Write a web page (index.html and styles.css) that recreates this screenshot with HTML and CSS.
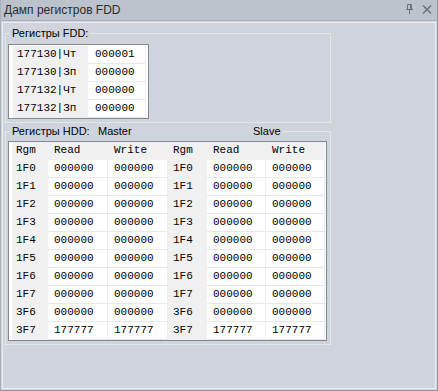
FILE: index.html
```html
<!DOCTYPE html>
<html lang="ru">
<head>
<meta charset="utf-8">
<title>Дамп регистров FDD</title>
<link rel="stylesheet" href="styles.css">
</head>
<body>
<div class="window">
  <div class="titlebar">
    <span class="title">Дамп регистров FDD</span>
    <span class="buttons">
      <svg class="pin" width="8" height="10" viewBox="0 0 8 10"><path d="M1.5 0.5H5.5V5.5M1.5 0.5V5.5M4.5 0.5V5.5" fill="none" stroke="#6e7278" stroke-width="1"/><path d="M0 5.5H7" stroke="#6e7278" stroke-width="1"/><path d="M3.5 6V10" stroke="#6e7278" stroke-width="1"/></svg>
      <svg class="close" width="10" height="9" viewBox="0 0 10 9"><path d="M1 0.5L9 8.5M9 0.5L1 8.5" stroke="#6e7278" stroke-width="1.5"/></svg>
    </span>
  </div>
  <div class="frame">
    <fieldset class="group fdd">
      <legend>Регистры FDD:</legend>
      <div class="list fdd-list">
        <div class="row"><span class="cell key">177130|Чт</span><span class="cell">000001</span></div>
        <div class="row"><span class="cell key">177130|Зп</span><span class="cell">000000</span></div>
        <div class="row"><span class="cell key">177132|Чт</span><span class="cell">000000</span></div>
        <div class="row"><span class="cell key">177132|Зп</span><span class="cell">000000</span></div>
      </div>
    </fieldset>
    <fieldset class="group hdd">
      <legend><span class="lg-hdd">Регистры HDD:</span><span class="lg-master">Master</span><span class="lg-slave">Slave</span></legend>
      <div class="list hdd-list">
        <div class="row head"><span class="cell key">Rgm</span><span class="cell">Read</span><span class="cell">Write</span><span class="cell key">Rgm</span><span class="cell">Read</span><span class="cell">Write</span></div>
        <div class="row"><span class="cell key">1F0</span><span class="cell">000000</span><span class="cell">000000</span><span class="cell key">1F0</span><span class="cell">000000</span><span class="cell">000000</span></div>
        <div class="row"><span class="cell key">1F1</span><span class="cell">000000</span><span class="cell">000000</span><span class="cell key">1F1</span><span class="cell">000000</span><span class="cell">000000</span></div>
        <div class="row"><span class="cell key">1F2</span><span class="cell">000000</span><span class="cell">000000</span><span class="cell key">1F2</span><span class="cell">000000</span><span class="cell">000000</span></div>
        <div class="row"><span class="cell key">1F3</span><span class="cell">000000</span><span class="cell">000000</span><span class="cell key">1F3</span><span class="cell">000000</span><span class="cell">000000</span></div>
        <div class="row"><span class="cell key">1F4</span><span class="cell">000000</span><span class="cell">000000</span><span class="cell key">1F4</span><span class="cell">000000</span><span class="cell">000000</span></div>
        <div class="row"><span class="cell key">1F5</span><span class="cell">000000</span><span class="cell">000000</span><span class="cell key">1F5</span><span class="cell">000000</span><span class="cell">000000</span></div>
        <div class="row"><span class="cell key">1F6</span><span class="cell">000000</span><span class="cell">000000</span><span class="cell key">1F6</span><span class="cell">000000</span><span class="cell">000000</span></div>
        <div class="row"><span class="cell key">1F7</span><span class="cell">000000</span><span class="cell">000000</span><span class="cell key">1F7</span><span class="cell">000000</span><span class="cell">000000</span></div>
        <div class="row"><span class="cell key">3F6</span><span class="cell">000000</span><span class="cell">000000</span><span class="cell key">3F6</span><span class="cell">000000</span><span class="cell">000000</span></div>
        <div class="row"><span class="cell key">3F7</span><span class="cell">177777</span><span class="cell">177777</span><span class="cell key">3F7</span><span class="cell">177777</span><span class="cell">177777</span></div>
      </div>
    </fieldset>
  </div>
</div>
</body>
</html>
```

FILE: styles.css
```css
* { box-sizing: border-box; }
html, body { margin: 0; padding: 0; }
body {
  width: 438px;
  height: 391px;
  overflow: hidden;
  font-family: "Liberation Sans", Arial, sans-serif;
}
.window {
  width: 438px;
  height: 391px;
  display: flex;
  flex-direction: column;
  background: #d0d4dc;
  border-left: 1px solid #aab0ba;
  border-right: 1px solid #8e949d;
  border-bottom: 1px solid #8e949d;
}
.titlebar {
  height: 21px;
  flex: none;
  background: #bcc3cd;
  border-bottom: 1px solid #a9b0ba;
  display: flex;
  align-items: center;
  justify-content: space-between;
  padding: 0 5px 0 3px;
}
.title {
  font-size: 12px;
  color: #2a2c30;
  line-height: 20px;
}
.buttons {
  display: flex;
  align-items: center;
  gap: 8px;
  padding-bottom: 2px;
}
.pin, .close { display: block; }
.frame {
  flex: 1;
  margin: 1px;
  border: 1px solid #eceef2;
}
.group {
  margin: 0 0 0 2px;
  width: 326px;
  border: 1px solid #e4e6ea;
  padding: 4px 2px 3px 2px;
  min-width: 0;
}
.group legend {
  font-size: 11px;
  line-height: 14px;
  height: 14px;
  padding: 0 2px;
  margin-left: 2px;
  color: #000;
  white-space: nowrap;
}
.fdd { margin-top: 3px; }
.hdd { margin-top: 1px; padding-top: 3px; }
.lg-hdd { display: inline-block; width: 86px; }
.lg-master { display: inline-block; width: 155px; }
.lg-slave { display: inline-block; }
.list {
  background: #fff;
  border: 1px solid #828790;
  font-family: "Liberation Mono", "Courier New", monospace;
  font-size: 11px;
  color: #000;
}
.fdd-list {
  width: 141px;
  padding: 1px 2px 0 4px;
}
.hdd-list {
  width: 319px;
  padding: 0 1px 0 3px;
}
.row {
  display: grid;
}
.fdd-list .row { grid-template-columns: 75px 58px; }
.hdd-list .row { grid-template-columns: 36px 60px 60px 39px 59px 59px; }
.cell {
  height: 18px;
  line-height: 17px;
  padding-left: 6px;
  border-bottom: 1px solid #e8e8e8;
  border-right: 1px solid #ececec;
  white-space: nowrap;
  overflow: hidden;
}
.cell.key {
  background: #f0f0f0;
  border-color: #f0f0f0;
  padding-left: 5px;
}
.fdd-list .cell { padding-left: 7px; }
.fdd-list .cell.key { padding-left: 4px; }
.hdd-list .cell.key:first-child { padding-left: 4px; }
.row.head .cell {
  background: #f0f0f0;
  border-color: #f0f0f0;
}
```
